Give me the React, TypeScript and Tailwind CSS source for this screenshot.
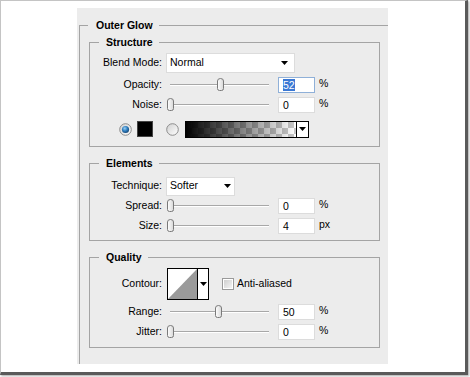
import React from "react";

const font = "font-['Liberation_Sans',Arial,sans-serif]";

function Thumb() {
  return (
    <svg width="9" height="13" viewBox="0 0 9 13">
      <defs>
        <linearGradient id="tg" x1="0" y1="0" x2="1" y2="0">
          <stop offset="0" stopColor="#ffffff" />
          <stop offset="1" stopColor="#d8d8d8" />
        </linearGradient>
      </defs>
      <path d="M1.5 3 Q1.5 0.5 4.5 0.5 Q7.5 0.5 7.5 3 L7.5 10.5 Q7.5 12.5 5.5 12.5 L3.5 12.5 Q1.5 12.5 1.5 10.5 Z" fill="url(#tg)" stroke="#7a7a7a" strokeWidth="1" />
    </svg>
  );
}

function Slider({ value }: { value: number }) {
  return (
    <div className="relative flex items-center w-[103px] h-[16px] shrink-0">
      <div className="ml-[4px] w-[99px] h-[2px] border-t border-[#a8a8a8] border-b border-b-white" />
      <div className="absolute top-[1px]" style={{ left: `${Math.round(value * 0.96)}px` }}>
        <Thumb />
      </div>
    </div>
  );
}

function NumInput({ value, focused }: { value: string; focused?: boolean }) {
  return (
    <div
      className={`ml-[9px] w-[37px] h-[16px] bg-white border flex items-center pl-[4px] ${
        focused ? "border-[#8fb0d8]" : "border-[#dcdcdc]"
      }`}
    >
      {focused ? (
        <span className="bg-[#3a78d4] text-white leading-[12px] px-[0px]">{value}</span>
      ) : (
        <span className="leading-[12px]">{value}</span>
      )}
    </div>
  );
}

function Unit({ children }: { children: React.ReactNode }) {
  return <span className="ml-[4px] -mt-[3px]">{children}</span>;
}

function Label({ children }: { children: React.ReactNode }) {
  return <div className="w-[72px] shrink-0 text-right">{children}</div>;
}

function Arrow() {
  return (
    <svg width="7" height="4" viewBox="0 0 7 4">
      <path d="M0 0 L7 0 L3.5 4 Z" fill="#000" />
    </svg>
  );
}

function Radio({ checked }: { checked?: boolean }) {
  return (
    <svg width="13" height="13" viewBox="0 0 13 13">
      <defs>
        <linearGradient id={checked ? "rg1" : "rg2"} x1="0" y1="0" x2="1" y2="1">
          <stop offset="0" stopColor="#d0d0d0" />
          <stop offset="1" stopColor="#ffffff" />
        </linearGradient>
        <radialGradient id="rb" cx="0.4" cy="0.35" r="0.7">
          <stop offset="0" stopColor="#9cd0f4" />
          <stop offset="0.5" stopColor="#2f7fc0" />
          <stop offset="1" stopColor="#12406e" />
        </radialGradient>
      </defs>
      <circle cx="6.5" cy="6.5" r="5.8" fill={`url(#${checked ? "rg1" : "rg2"})`} stroke="#8c8c8c" strokeWidth="1" />
      {checked && <circle cx="6.5" cy="6.5" r="3.6" fill="url(#rb)" />}
    </svg>
  );
}

function Group({
  title,
  className,
  children,
}: {
  title: string;
  className?: string;
  children: React.ReactNode;
}) {
  return (
    <fieldset className={`border border-[#a4a4a4] ${className ?? ""}`}>
      <legend className="ml-[9px] pl-[7px] pr-[6px] font-bold leading-[14px]">{title}</legend>
      {children}
    </fieldset>
  );
}

export default function App() {
  return (
    <div className={`w-[470px] h-[377px] bg-white ${font} text-[10.5px] text-black`}>
      <div className="w-[468px] h-[375px] border-l border-t border-l-[#c4c4c4] border-t-[#c4c4c4] border-r-[3px] border-b-[3px] border-r-[#5a5a5a] border-b-[#5a5a5a] shadow-[1px_1px_2px_rgba(0,0,0,0.35)] bg-white">
        <div className="ml-[76px] mt-[7px] w-[311px] h-[356px] bg-[#ececec] pt-[10px] pl-[2px]">
          <fieldset className="border-t border-l border-[#a4a4a4] h-[346px]">
            <legend className="ml-[8px] pl-[8px] pr-[6px] font-bold leading-[14px]">Outer Glow</legend>

            <Group title="Structure" className="ml-[9px] mt-[3px] w-[291px] pb-[9px]">
              <div className="flex items-center mt-[4px] h-[20px]">
                <Label>Blend Mode:</Label>
                <div className="ml-[4px] w-[129px] h-[20px] bg-white border border-[#dcdcdc] flex items-center justify-between pl-[3px] pr-[6px]">
                  <span>Normal</span>
                  <Arrow />
                </div>
              </div>
              <div className="flex items-center mt-[4px] h-[16px]">
                <Label>Opacity:</Label>
                <div className="ml-[4px]">
                  <Slider value={52} />
                </div>
                <NumInput value="52" focused />
                <Unit>%</Unit>
              </div>
              <div className="flex items-center mt-[4px] h-[16px]">
                <Label>Noise:</Label>
                <div className="ml-[4px]">
                  <Slider value={0} />
                </div>
                <NumInput value="0" />
                <Unit>%</Unit>
              </div>
              <div className="flex items-center mt-[8px] h-[16px] pl-[29px]">
                <Radio checked />
                <div className="ml-[5px] w-[16px] h-[16px] bg-black border border-[#444]" />
                <div className="ml-[13px]">
                  <Radio />
                </div>
                <div className="ml-[6px] w-[124px] h-[17px] border border-black flex">
                  <div className="flex-1 bg-[repeating-conic-gradient(#c8c8c8_0%_25%,#ffffff_0%_50%)] bg-[length:12px_12px]">
                    <div className="w-full h-full bg-gradient-to-r from-black to-transparent" />
                  </div>
                  <div className="w-[12px] bg-white border-l border-black flex items-center justify-center">
                    <Arrow />
                  </div>
                </div>
              </div>
            </Group>

            <Group title="Elements" className="ml-[9px] mt-[9px] w-[291px] pb-[6px]">
              <div className="flex items-center mt-[7px] h-[18px]">
                <Label>Technique:</Label>
                <div className="ml-[4px] w-[69px] h-[19px] bg-white border border-[#dcdcdc] flex items-center justify-between pl-[3px] pr-[3px]">
                  <span>Softer</span>
                  <Arrow />
                </div>
              </div>
              <div className="flex items-center mt-[3px] h-[16px]">
                <Label>Spread:</Label>
                <div className="ml-[4px]">
                  <Slider value={0} />
                </div>
                <NumInput value="0" />
                <Unit>%</Unit>
              </div>
              <div className="flex items-center mt-[4px] h-[16px]">
                <Label>Size:</Label>
                <div className="ml-[4px]">
                  <Slider value={0} />
                </div>
                <NumInput value="4" />
                <Unit>px</Unit>
              </div>
            </Group>

            <Group title="Quality" className="ml-[9px] mt-[9px] w-[291px] pb-[7px]">
              <div className="flex items-center mt-[4px] h-[32px]">
                <Label>Contour:</Label>
                <div className="ml-[5px] w-[42px] h-[32px] border border-black flex bg-white">
                  <svg width="29" height="30" viewBox="0 0 29 30" className="block">
                    <path d="M0 30 L29 0 L29 30 Z" fill="#9a9a9a" />
                  </svg>
                  <div className="w-[11px] border-l border-black flex items-center justify-center">
                    <Arrow />
                  </div>
                </div>
                <div className="ml-[13px] w-[12px] h-[12px] border border-[#9a9a9a] bg-white p-[1px]">
                  <div className="w-full h-full bg-gradient-to-br from-[#cfcfcf] to-[#f4f4f4]" />
                </div>
                <span className="ml-[3px]">Anti-aliased</span>
              </div>
              <div className="flex items-center mt-[4px] h-[16px]">
                <Label>Range:</Label>
                <div className="ml-[4px]">
                  <Slider value={50} />
                </div>
                <NumInput value="50" />
                <Unit>%</Unit>
              </div>
              <div className="flex items-center mt-[4px] h-[16px]">
                <Label>Jitter:</Label>
                <div className="ml-[4px]">
                  <Slider value={0} />
                </div>
                <NumInput value="0" />
                <Unit>%</Unit>
              </div>
            </Group>
          </fieldset>
        </div>
      </div>
    </div>
  );
}
